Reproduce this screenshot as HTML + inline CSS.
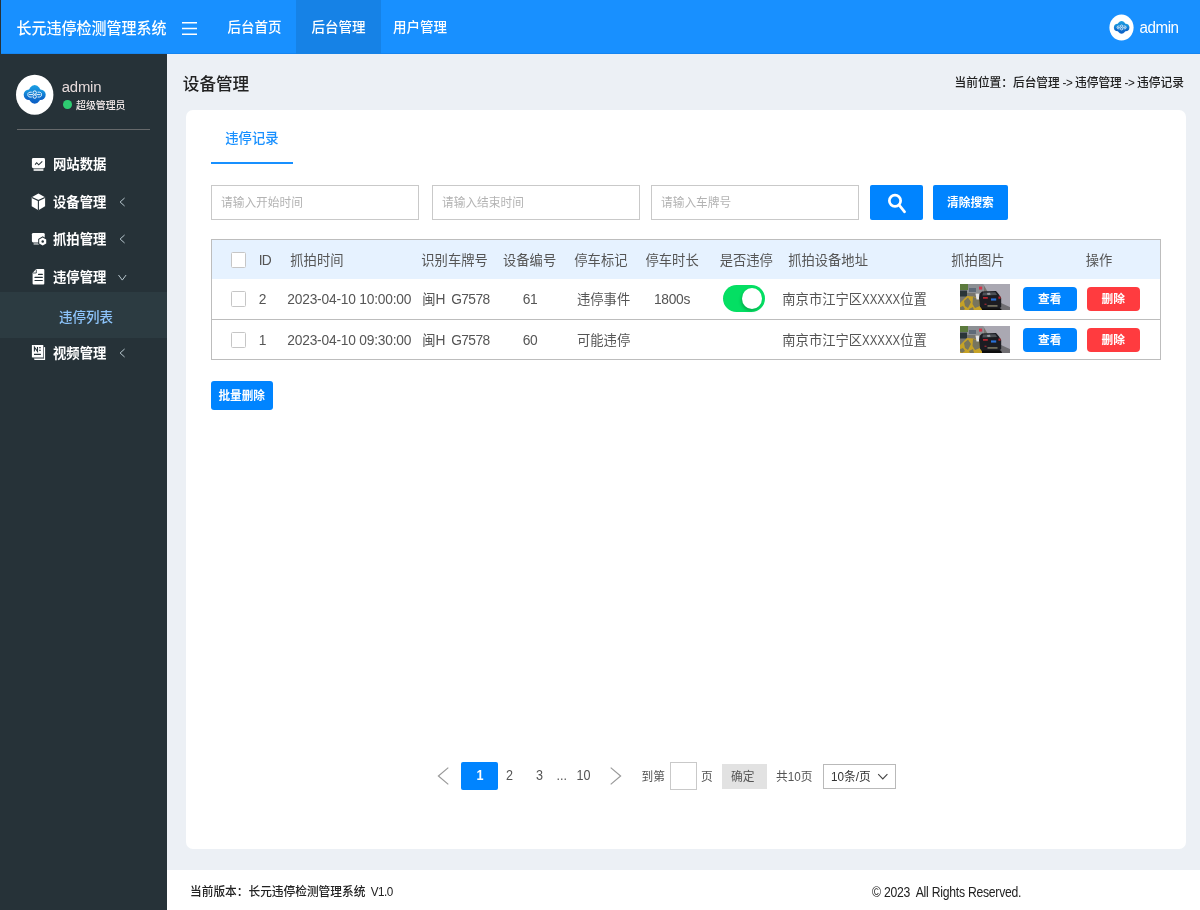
<!DOCTYPE html>
<html lang="zh-CN">
<head>
<meta charset="utf-8">
<title>长元违停检测管理系统</title>
<style>
*{box-sizing:border-box;margin:0;padding:0}
html,body{width:1200px;height:910px;overflow:hidden}
body{position:relative;background:#ecf0f5;font-family:"Liberation Sans","Noto Sans CJK SC",sans-serif;font-size:13.5px;color:#333}
#app{position:absolute;left:0;top:0;width:1200px;height:910px;will-change:transform}
.a{position:absolute;white-space:nowrap}
.t{position:absolute;white-space:nowrap;line-height:20px;height:20px;transform:scaleY(1.04)}
#hdr{left:1px;top:0;width:1199px;height:54px;background:#1890ff}
#side{left:0;top:0;width:167px;height:910px;background:#263238}
#card{left:186px;top:110px;width:1000px;height:739px;background:#fff;border-radius:7px}
#foot{left:167px;top:870px;width:1033px;height:40px;background:#fff}
.w{color:#fff}
.m{font-weight:500}
.b{font-weight:700}
.nav{font-size:13.5px;font-weight:500;color:#fff}
.menu{font-size:13.35px;font-weight:700;color:#fff;left:53px}
.inp{height:35px;width:208px;top:185px;border:1px solid #c9c9c9;background:#fff}
.ph{font-size:11.7px;color:#b3b3b3;top:192.5px}
.btn{background:#0084ff;border-radius:2px}
.th{font-size:13.3px;color:#555;top:250.9px}
.td{font-size:13.3px;color:#555}
.l{font-size:13.8px;display:inline-block;position:relative;top:.4px;transform:scaleY(1.08);transform-origin:0 72%}
.x{transform:scale(.83,1.08);margin-right:-7.8px}
.r1{top:289.8px}
.r2{top:330.5px}
.cb{width:15px;height:16px;border:1px solid #c6c6c6;border-radius:1.5px;background:#fff}
.sb{height:24px;width:53.6px;border-radius:4px;color:#fff;font-size:11.7px;font-weight:700;text-align:center;line-height:24px}
.pg{font-size:12.6px;color:#555;top:766px;transform:scaleY(1.12)}
.ps{font-size:11.7px;color:#555;top:766.6px}
</style>
</head>
<body>
<div id="app">
<!-- header -->
<div id="side" class="a"></div>
<div id="hdr" class="a"></div>
<div class="a" style="left:1px;top:53px;width:1199px;height:1px;background:rgba(0,40,120,.1)"></div>
<div class="a" style="left:296px;top:0;width:85px;height:54px;background:#1682e6"></div>
<div class="t w m" style="left:16.5px;top:18.5px;font-size:15px">长元违停检测管理系统</div>
<svg class="a" style="left:181px;top:21px" width="17" height="15" viewBox="0 0 17 15"><g stroke="#fff" stroke-width="1.5"><path d="M1 1.8H16M1 7.5H16M1 13.2H16"/></g></svg>
<div class="t nav" style="left:227.5px;top:18px">后台首页</div>
<div class="t nav" style="left:311.5px;top:18px">后台管理</div>
<div class="t nav" style="left:393px;top:18px">用户管理</div>
<svg class="a" style="left:1105px;top:10px" width="34" height="35" viewBox="1105 10 34 35"><defs><linearGradient id="lg" x1="0" y1="0" x2="0" y2="1"><stop offset="0" stop-color="#1b9fe3"/><stop offset="1" stop-color="#0a5cc4"/></linearGradient></defs><ellipse cx="1121.5" cy="27.6" rx="12.1" ry="13" fill="#fff"/><g fill="url(#lg)"><rect x="1113.9" y="23.7" width="15.5" height="7.6" rx="3.8"/><ellipse cx="1121.6" cy="27.4" rx="4.7" ry="6.3"/></g><g fill="none" stroke="#fff" stroke-width=".7"><circle cx="1121.6" cy="26.1" r="1.15"/><circle cx="1121.6" cy="28.8" r="1.15"/><path d="M1119.6 25.9Q1116.8 25.6 1117 27.4Q1116.8 29.2 1119.6 28.9M1123.6 25.9Q1126.4 25.6 1126.2 27.4Q1126.4 29.2 1123.6 28.9M1117.6 27.4H1120.4M1122.8 27.4H1125.6"/></g></svg>
<div class="t w" style="left:1139.5px;top:18.3px;font-size:15.2px;letter-spacing:-.45px">admin</div>

<!-- sidebar -->
<svg class="a" style="left:10px;top:70px" width="50" height="50" viewBox="10 70 50 50"><ellipse cx="34.7" cy="94.7" rx="18.7" ry="20" fill="#fff"/><g fill="url(#lg)"><rect x="23.7" y="89.4" width="22" height="10.6" rx="5.3"/><ellipse cx="34.7" cy="94.4" rx="6.6" ry="9.4"/></g><g fill="none" stroke="#fff" stroke-width=".9"><circle cx="34.7" cy="92.6" r="1.7"/><circle cx="34.7" cy="96.6" r="1.7"/><path d="M31.8 92.2Q27.6 91.8 27.9 94.6Q27.6 97.4 31.8 97M37.6 92.2Q41.8 91.8 41.5 94.6Q41.8 97.4 37.6 97M29 94.6H33M36.4 94.6H40.4"/></g></svg>
<div class="t" style="left:61.8px;top:77.2px;font-size:14.9px;letter-spacing:-.22px;color:#e6dada">admin</div>
<div class="a" style="left:63px;top:100px;width:9px;height:9.4px;border-radius:50%;background:#2ecc71"></div>
<div class="t m" style="left:76px;top:95.8px;font-size:9.9px;color:#f3e9e9">超级管理员</div>
<div class="a" style="left:17px;top:129px;width:133px;height:1px;background:#66696b"></div>
<div class="a" style="left:0;top:292px;width:167px;height:46px;background:#2c3b41"></div>
<div class="t menu" style="top:154.5px">网站数据</div>
<div class="t menu" style="top:192.6px">设备管理</div>
<div class="t menu" style="top:229.8px">抓拍管理</div>
<div class="t menu" style="top:268.1px">违停管理</div>
<div class="t" style="left:59px;top:307.8px;font-size:13.5px;color:#8dc4fb;font-weight:500">违停列表</div>
<div class="t menu" style="top:343.6px">视频管理</div>
<!-- sidebar icons -->
<svg class="a" style="left:26px;top:152px" width="26" height="26" viewBox="26 152 26 26"><rect x="31.9" y="158" width="13.1" height="10.2" rx="1.4" fill="#fff"/><rect x="33.6" y="168.2" width="9.8" height="0.8" fill="#8b9295"/><rect x="33.6" y="169" width="9.8" height="2" fill="#d4d7d8"/><path d="M35.1 164.6L36.7 162.7L38.7 164.8L42.3 161.4" fill="none" stroke="#263238" stroke-width="1.1"/></svg>
<svg class="a" style="left:26px;top:189px" width="26" height="26" viewBox="26 189 26 26"><path d="M38.4 193.5L45.1 197.3V206.2L38.4 210.2L31.7 206.2V197.3Z" fill="#fff"/><path d="M31.9 197.4L38.4 200.6L44.9 197.4M38.4 200.6V210" fill="none" stroke="#263238" stroke-width="1.1"/></svg>
<svg class="a" style="left:26px;top:226px" width="26" height="26" viewBox="26 226 26 26"><rect x="31.9" y="232.9" width="12.8" height="9.5" rx="1.4" fill="#fff"/><rect x="33.6" y="242.9" width="6" height="2" fill="#9aa0a3"/><path d="M42.7 236.3L47.2 238.9V244.1L42.7 246.7L38.2 244.1V238.9Z" fill="#263238"/><path d="M42.7 237.5L46.2 239.5V243.5L42.7 245.5L39.2 243.5V239.5Z" fill="#fff"/><circle cx="42.7" cy="241.5" r="1.25" fill="#263238"/></svg>
<svg class="a" style="left:26px;top:264px" width="26" height="26" viewBox="26 264 26 26"><path d="M36.2 269.1H43.3Q44.3 269.1 44.3 270.1V283.4Q44.3 284.4 43.3 284.4H33.6Q32.6 284.4 32.6 283.4V272.9Z" fill="#fff"/><path d="M36.3 269.6V273H33" fill="none" stroke="#263238" stroke-width=".8"/><path d="M38.6 274.4H42.3M35 277.4H42.3M35 280.5H42.3" fill="none" stroke="#263238" stroke-width="1.2" stroke-linecap="round"/></svg>
<svg class="a" style="left:26px;top:340px" width="26" height="26" viewBox="26 340 26 26"><path d="M34.3 347.1H45.1V360H34.3Z" fill="#fff"/><path d="M31.4 344.5H43.9V358.6H31.4Z" fill="#263238"/><path d="M31.9 345H43.3V357.4H31.9Z" fill="#fff"/><path d="M32.5 357.4H43.3V358.6H34.3Z" fill="#aab0b3"/><path d="M34.4 351.4V347.1L37.5 351.4V347.1" fill="none" stroke="#263238" stroke-width="1.1"/><path d="M39 347.7H40.9M39 350.3H40.9M34 354.4H40.9" fill="none" stroke="#263238" stroke-width="1.1"/></svg>
<!-- sidebar arrows -->
<svg class="a" style="left:116px;top:195px" width="14" height="14" viewBox="116 195 14 14"><path d="M124.6 198L120.1 202L124.6 206" fill="none" stroke="#b8c7ce" stroke-width="1"/></svg>
<svg class="a" style="left:116px;top:232px" width="14" height="14" viewBox="116 232 14 14"><path d="M124.6 235L120.1 239L124.6 243" fill="none" stroke="#b8c7ce" stroke-width="1"/></svg>
<svg class="a" style="left:116px;top:270px" width="14" height="14" viewBox="116 270 14 14"><path d="M118.5 275L122.3 280.1L126.1 275" fill="none" stroke="#b8c7ce" stroke-width="1"/></svg>
<svg class="a" style="left:116px;top:346px" width="14" height="14" viewBox="116 346 14 14"><path d="M124.6 349L120.1 353L124.6 357" fill="none" stroke="#b8c7ce" stroke-width="1"/></svg>

<!-- content -->
<div class="t m" style="left:182.8px;top:74.7px;font-size:16.6px;color:#222;transform:scaleY(1.06)">设备管理</div>
<div class="t m" style="left:954.5px;top:72.5px;font-size:11.7px;color:#222">当前位置：后台管理<span style="letter-spacing:-.48px;white-space:pre"> -&gt; </span>违停管理<span style="letter-spacing:-.48px;white-space:pre"> -&gt; </span>违停记录</div>
<div id="card" class="a"></div>
<div class="t" style="left:225.3px;top:128.5px;font-size:13.3px;color:#1890ff;font-weight:500">违停记录</div>
<div class="a" style="left:211px;top:161.5px;width:82px;height:2.5px;background:#1890ff"></div>

<div class="a inp" style="left:211px"></div>
<div class="a inp" style="left:432px"></div>
<div class="a inp" style="left:651px"></div>
<div class="t ph" style="left:221px">请输入开始时间</div>
<div class="t ph" style="left:442px">请输入结束时间</div>
<div class="t ph" style="left:661px">请输入车牌号</div>
<div class="a btn" style="left:870px;top:185px;width:53px;height:35px"></div>
<svg class="a" style="left:885px;top:190px" width="24" height="26" viewBox="0 0 24 26"><g fill="none" stroke="#fff" stroke-width="2.7" stroke-linecap="round"><circle cx="10" cy="10.7" r="5.65"/><path d="M14.2 15.2L19.6 21.8"/></g></svg>
<div class="a btn" style="left:933px;top:185px;width:75px;height:35px"></div>
<div class="t w b" style="left:947px;top:192.5px;font-size:11.7px">清除搜索</div>

<!-- table -->
<div class="a" style="left:211px;top:239px;width:950px;height:121px;border:1px solid #bdbdbd;background:#fff"></div>
<div class="a" style="left:212px;top:240px;width:948px;height:39px;background:#e6f2ff"></div>
<div class="a" style="left:211px;top:319px;width:950px;height:1px;background:#bdbdbd"></div>

<div class="a cb" style="left:231px;top:251.6px"></div>
<div class="a cb" style="left:231px;top:291.4px"></div>
<div class="a cb" style="left:231px;top:332.1px"></div>

<div class="t th" style="left:258.8px"><span class="l" style="letter-spacing:-.8px">ID</span></div>
<div class="t th" style="left:290.3px">抓拍时间</div>
<div class="t th" style="left:421.3px">识别车牌号</div>
<div class="t th" style="left:503px">设备编号</div>
<div class="t th" style="left:574.3px">停车标记</div>
<div class="t th" style="left:645.5px">停车时长</div>
<div class="t th" style="left:719.7px">是否违停</div>
<div class="t th" style="left:788.2px">抓拍设备地址</div>
<div class="t th" style="left:951.3px">抓拍图片</div>
<div class="t th" style="left:1085.8px">操作</div>

<div class="t td r1" style="left:258.8px"><span class="l">2</span></div>
<div class="t td r1" style="left:287.3px"><span class="l" style="letter-spacing:-.22px">2023-04-10 10:00:00</span></div>
<div class="t td r1" style="left:422.3px">闽<span class="l" style="letter-spacing:-.62px;word-spacing:-.1px">H&nbsp; G7578</span></div>
<div class="t td r1" style="left:522.8px"><span class="l" style="letter-spacing:-.5px">61</span></div>
<div class="t td r1" style="left:577px">违停事件</div>
<div class="t td r1" style="left:654px"><span class="l" style="letter-spacing:-.32px">1800s</span></div>
<div class="t td r1" style="left:782.3px">南京市江宁区<span class="l x">XXXXX</span>位置</div>

<div class="t td r2" style="left:258.8px"><span class="l">1</span></div>
<div class="t td r2" style="left:287.3px"><span class="l" style="letter-spacing:-.22px">2023-04-10 09:30:00</span></div>
<div class="t td r2" style="left:422.3px">闽<span class="l" style="letter-spacing:-.62px;word-spacing:-.1px">H&nbsp; G7578</span></div>
<div class="t td r2" style="left:522.8px"><span class="l" style="letter-spacing:-.5px">60</span></div>
<div class="t td r2" style="left:577px">可能违停</div>
<div class="t td r2" style="left:782.3px">南京市江宁区<span class="l x">XXXXX</span>位置</div>

<!-- toggle -->
<div class="a" style="left:723.2px;top:285px;width:41.8px;height:27px;border-radius:13.5px;background:#04df63"></div>
<div class="a" style="left:742.2px;top:288px;width:20.2px;height:21.2px;border-radius:50%;background:#fff;box-shadow:-1px 2px 3px rgba(0,60,20,.28)"></div>

<!-- thumbs -->
<svg class="a" width="0" height="0" style="left:0;top:0"><defs><filter id="bl" x="-5%" y="-5%" width="110%" height="110%"><feGaussianBlur stdDeviation=".55"/></filter></defs></svg>
<svg class="a" style="left:960px;top:283.6px" width="50" height="26.5" viewBox="0 0 50 26.5"><g filter="url(#bl)"><rect x="-2" y="-2" width="54" height="31" fill="#77766f"/><path d="M-2 -2H24V9H-2Z" fill="#8d9094"/><path d="M22 -2H52V29H40Z" fill="#aaa8b2"/><path d="M41 19L52 24V29H40Z" fill="#6f6e72"/><path d="M-2 -2H8V6H-2Z" fill="#5c7a3c"/><path d="M-2 6.5H7V12.5H-2Z" fill="#2b3638"/><rect x="9" y="4" width="7" height="4" fill="#5e6a78"/><rect x="19" y="2.6" width="3.2" height="3" fill="#d2364c"/><path d="M-2 21L7 12L13 12.5L20 14L22 20L25 29H-2Z" fill="#c6a226"/><path d="M4 17L8 13.5L11 18L8 24L5 22ZM13 13L19 14.5L20 22L15 24L12.5 20ZM-2 24L3 22L5 25L2 27ZM9 25L13 23L14 27H10Z" fill="#77745f"/><path d="M15.5 9.5H19.5V15.5H16.5Z" fill="#e4e4e6"/><path d="M19 14L19.6 10L22 7.4L36 7L38.6 10L41.2 14V22.5L39.5 25.5H22L20 22.5Z" fill="#1c1e23"/><path d="M23 8.6L35.4 8.2L37 11L22.4 11.6Z" fill="#4d5157"/><path d="M27 9L30 8.8L30.5 10.8L27.5 11Z" fill="#9a9ea4"/><path d="M23 13H27.8V14.8H23ZM38.4 12.6H40.6V14.8H38.4Z" fill="#b5252f"/><rect x="31" y="14.4" width="5.2" height="2.2" fill="#2a70d8"/><rect x="27.5" y="21" width="10" height="1.8" fill="#6f6c5c"/><rect x="24.5" y="19.6" width="2" height="1.4" fill="#8c2630"/><path d="M22 24.6H41L42 27H22Z" fill="#0d0e10"/></g></svg>
<svg class="a" style="left:960px;top:326px" width="50" height="26.5" viewBox="0 0 50 26.5"><g filter="url(#bl)"><rect x="-2" y="-2" width="54" height="31" fill="#77766f"/><path d="M-2 -2H24V9H-2Z" fill="#8d9094"/><path d="M22 -2H52V29H40Z" fill="#aaa8b2"/><path d="M41 19L52 24V29H40Z" fill="#6f6e72"/><path d="M-2 -2H8V6H-2Z" fill="#5c7a3c"/><path d="M-2 6.5H7V12.5H-2Z" fill="#2b3638"/><rect x="9" y="4" width="7" height="4" fill="#5e6a78"/><rect x="19" y="2.6" width="3.2" height="3" fill="#d2364c"/><path d="M-2 21L7 12L13 12.5L20 14L22 20L25 29H-2Z" fill="#c6a226"/><path d="M4 17L8 13.5L11 18L8 24L5 22ZM13 13L19 14.5L20 22L15 24L12.5 20ZM-2 24L3 22L5 25L2 27ZM9 25L13 23L14 27H10Z" fill="#77745f"/><path d="M15.5 9.5H19.5V15.5H16.5Z" fill="#e4e4e6"/><path d="M19 14L19.6 10L22 7.4L36 7L38.6 10L41.2 14V22.5L39.5 25.5H22L20 22.5Z" fill="#1c1e23"/><path d="M23 8.6L35.4 8.2L37 11L22.4 11.6Z" fill="#4d5157"/><path d="M27 9L30 8.8L30.5 10.8L27.5 11Z" fill="#9a9ea4"/><path d="M23 13H27.8V14.8H23ZM38.4 12.6H40.6V14.8H38.4Z" fill="#b5252f"/><rect x="31" y="14.4" width="5.2" height="2.2" fill="#2a70d8"/><rect x="27.5" y="21" width="10" height="1.8" fill="#6f6c5c"/><rect x="24.5" y="19.6" width="2" height="1.4" fill="#8c2630"/><path d="M22 24.6H41L42 27H22Z" fill="#0d0e10"/></g></svg>

<div class="a sb" style="left:1023px;top:287px;background:#0084ff">查看</div>
<div class="a sb" style="left:1086.5px;top:287px;background:#ff3b3f">删除</div>
<div class="a sb" style="left:1023px;top:327.5px;background:#0084ff">查看</div>
<div class="a sb" style="left:1086.5px;top:327.5px;background:#ff3b3f">删除</div>

<div class="a btn" style="left:211px;top:380.5px;width:62px;height:29px;border-radius:3px"></div>
<div class="t w b" style="left:218.5px;top:386.3px;font-size:11.6px">批量删除</div>

<!-- pagination -->
<div class="a btn" style="left:460.5px;top:761.5px;width:37.5px;height:28.5px;border-radius:2px"></div>
<div class="t pg b" style="left:476.5px;color:#fff">1</div>
<div class="t pg" style="left:506px">2</div>
<div class="t pg" style="left:536px">3</div>
<div class="t pg" style="left:556.5px">...</div>
<div class="t pg" style="left:576.5px">10</div>
<div class="t ps" style="left:641.5px">到第</div>
<div class="a" style="left:670px;top:761.5px;width:27px;height:28.5px;border:1px solid #c9c9c9;background:#fff"></div>
<div class="t ps" style="left:701px">页</div>
<div class="a" style="left:721.7px;top:764.2px;width:45px;height:24.7px;background:#e2e2e2"></div>
<div class="t ps" style="left:731px">确定</div>
<div class="t ps" style="left:776px">共10页</div>
<div class="a" style="left:823px;top:764.3px;width:73px;height:24.7px;border:1px solid #b9b9b9;background:#fff"></div>
<div class="t ps" style="left:831px;color:#333">10条/页</div>
<svg class="a" style="left:437px;top:766px" width="13" height="20" viewBox="0 0 13 20"><path d="M11.3 1.6L1.4 10L11.3 18.4" fill="none" stroke="#999" stroke-width="1.2"/></svg>
<svg class="a" style="left:609px;top:766px" width="13" height="20" viewBox="0 0 13 20"><path d="M1.7 1.6L11.6 10L1.7 18.4" fill="none" stroke="#999" stroke-width="1.2"/></svg>
<svg class="a" style="left:877px;top:773px" width="12" height="8" viewBox="0 0 12 8"><path d="M1.2 1.2L5.8 6L10.4 1.2" fill="none" stroke="#444" stroke-width="1.1"/></svg>

<!-- footer -->
<div id="foot" class="a"></div>
<div class="t m" style="left:190px;top:882px;font-size:11.7px;color:#222">当前版本：长元违停检测管理系统<span style="letter-spacing:-.5px;white-space:pre">  V1.0</span></div>
<div class="t" style="left:872px;top:882.3px;font-size:12.2px;color:#222;letter-spacing:-.24px;white-space:pre;transform:scaleY(1.13)">© 2023  All Rights Reserved.</div>
</div>
</body>
</html>
